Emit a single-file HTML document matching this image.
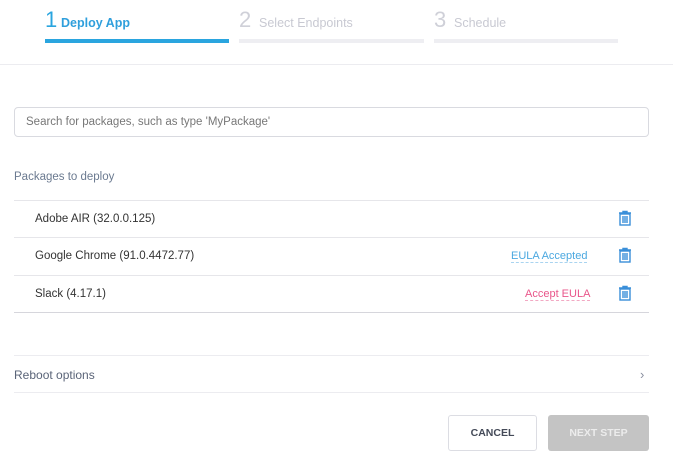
<!DOCTYPE html><html><head><style>
*{box-sizing:border-box;margin:0;padding:0}
body{width:673px;height:467px;background:#fff;font-family:"Liberation Sans",sans-serif;position:relative;overflow:hidden;color:#333}
.a{position:absolute}
.step{position:absolute;top:8px;height:35px;border-bottom:4px solid #eeeef2}
.step .n{position:absolute;left:0;top:-1px;font-size:22px;color:#cfd0d8}
.step .t{position:absolute;left:16px;top:8px;font-size:12.5px;color:#c8c9d2}
.row{position:absolute;left:14px;width:635px;border-top:1px solid #e6e6ea;height:38px}
.row .name{position:absolute;left:21px;top:12px;font-size:11.5px;color:#333}
.trash{position:absolute;left:604px;top:9px}
</style></head><body>
<div class="step" style="left:45px;width:184px;border-color:#2aa5df"><span class="n" style="color:#2aa5df">1</span><span class="t" style="color:#2f9fdc;font-weight:bold">Deploy App</span></div>
<div class="step" style="left:239px;width:185px"><span class="n">2</span><span class="t" style="left:20px">Select Endpoints</span></div>
<div class="step" style="left:434px;width:184px"><span class="n">3</span><span class="t" style="left:20px">Schedule</span></div>
<div class="a" style="left:0;top:64px;width:673px;border-top:1px solid #ececf0"></div>
<div class="a" style="left:14px;top:107px;width:635px;height:30px;border:1px solid #d9dae0;border-radius:4px;font-size:11.5px;color:#777;padding:8px 11px">Search for packages, such as type 'MyPackage'</div>
<div class="a" style="left:14px;top:171px;font-size:11.5px;color:#6b7a90">Packages to deploy</div>
<div class="row" style="top:200px"><span class="name">Adobe AIR (32.0.0.125)</span><svg class="trash" width="14" height="16" viewBox="0 0 14 16"><g fill="none" stroke="#3a8fd9" stroke-width="1.4"><rect x="2" y="4" width="10" height="11"/><path d="M1 3h12M5 3V1.5h4V3M5 6v7M7 6v7M9 6v7"/></g></svg></div>
<div class="row" style="top:237px"><span class="name">Google Chrome (91.0.4472.77)</span><span class="a" style="left:497px;top:12px;font-size:11px;color:#4ba8e0;border-bottom:1px dashed #a9d4f0">EULA Accepted</span><svg class="trash" width="14" height="16" viewBox="0 0 14 16"><g fill="none" stroke="#3a8fd9" stroke-width="1.4"><rect x="2" y="4" width="10" height="11"/><path d="M1 3h12M5 3V1.5h4V3M5 6v7M7 6v7M9 6v7"/></g></svg></div>
<div class="row" style="top:275px;border-bottom:1px solid #d6d6dc"><span class="name">Slack (4.17.1)</span><span class="a" style="left:511px;top:12px;font-size:11px;color:#e9568a;border-bottom:1px dashed #f2a9c3">Accept EULA</span><svg class="trash" width="14" height="16" viewBox="0 0 14 16"><g fill="none" stroke="#3a8fd9" stroke-width="1.4"><rect x="2" y="4" width="10" height="11"/><path d="M1 3h12M5 3V1.5h4V3M5 6v7M7 6v7M9 6v7"/></g></svg></div>
<div class="a" style="left:14px;top:355px;width:635px;height:38px;border-top:1px solid #ececf0;border-bottom:1px solid #ececf0"><span class="a" style="left:0;top:12px;font-size:12px;color:#5a6478">Reboot options</span><span class="a" style="left:626px;top:11px;font-size:13px;color:#8a8fa0">›</span></div>
<div class="a" style="left:448px;top:415px;width:89px;height:36px;border:1px solid #dcdde3;border-radius:3px;font-size:10.5px;font-weight:bold;color:#444a58;text-align:center;line-height:34px">CANCEL</div>
<div class="a" style="left:548px;top:415px;width:101px;height:36px;background:#c4c4c4;border-radius:3px;font-size:10.5px;font-weight:bold;color:#ececec;text-align:center;line-height:36px">NEXT STEP</div>
</body></html>
